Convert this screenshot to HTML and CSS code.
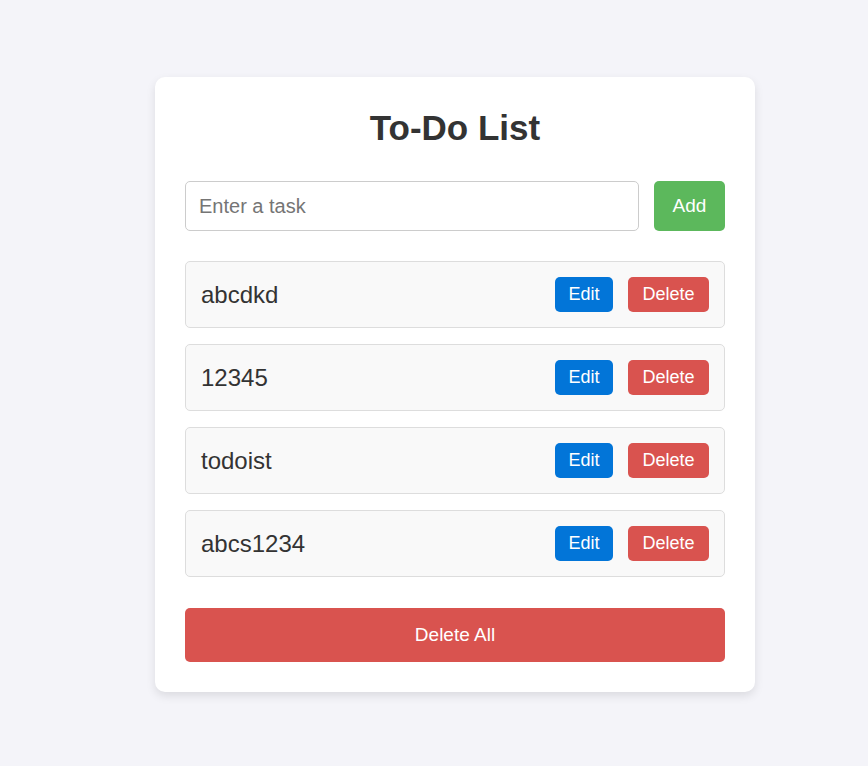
FILE: index.html
```html
<!DOCTYPE html>
<html lang="en">
<head>
<meta charset="UTF-8">
<title>To-Do List</title>
<link rel="stylesheet" href="styles.css">
</head>
<body>
<div class="card">
  <h1 class="title">To-Do List</h1>
  <div class="add-row">
    <input class="task-input" type="text" placeholder="Enter a task">
    <button class="btn btn-add">Add</button>
  </div>
  <ul class="list">
    <li class="item"><span class="item-text">abcdkd</span><div class="actions"><button class="btn btn-edit">Edit</button><button class="btn btn-delete">Delete</button></div></li>
    <li class="item"><span class="item-text">12345</span><div class="actions"><button class="btn btn-edit">Edit</button><button class="btn btn-delete">Delete</button></div></li>
    <li class="item"><span class="item-text">todoist</span><div class="actions"><button class="btn btn-edit">Edit</button><button class="btn btn-delete">Delete</button></div></li>
    <li class="item"><span class="item-text">abcs1234</span><div class="actions"><button class="btn btn-edit">Edit</button><button class="btn btn-delete">Delete</button></div></li>
  </ul>
  <button class="btn btn-delete-all">Delete All</button>
</div>
</body>
</html>
```
FILE: styles.css
```css
* { box-sizing: border-box; }
html, body { margin: 0; padding: 0; }
body {
  background: #f4f4f9;
  font-family: "Liberation Sans", Arial, sans-serif;
  color: #333;
  padding-top: 77px;
  padding-left: 155px;
  min-height: 766px;
}
.card {
  width: 600px;
  background: #fff;
  border-radius: 10px;
  box-shadow: 0 4px 10px rgba(0,0,0,0.1);
  padding: 30px;
}
.title {
  margin: 0 0 33px;
  text-align: center;
  font-size: 35px;
  font-weight: bold;
  line-height: 41px;
  color: #333;
}
.add-row {
  display: flex;
  gap: 15px;
  margin-bottom: 30px;
}
.task-input {
  flex: 1;
  height: 50px;
  border: 1px solid #ccc;
  border-radius: 5px;
  padding: 0 13px;
  font-family: inherit;
  font-size: 20px;
  color: #333;
  outline: none;
}
.task-input::placeholder { color: #757575; }
.btn {
  border: none;
  border-radius: 5px;
  color: #fff;
  font-family: inherit;
  cursor: pointer;
}
.btn-add {
  width: 71px;
  height: 50px;
  background: #5cb85c;
  font-size: 19px;
}
.list {
  list-style: none;
  margin: 0 0 31px;
  padding: 0;
  display: flex;
  flex-direction: column;
  gap: 16px;
}
.item {
  display: flex;
  align-items: center;
  justify-content: space-between;
  background: #f9f9f9;
  border: 1px solid #ddd;
  border-radius: 5px;
  padding: 15px;
  height: 67px;
}
.item-text { font-size: 24px; color: #333; }
.actions { display: flex; gap: 15px; }
.btn-edit, .btn-delete {
  height: 35px;
  padding: 0 13px;
  font-size: 18px;
}
.btn-edit { background: #0275d8; width: 58px; }
.btn-delete { background: #d9534f; width: 81px; }
.btn-delete-all {
  display: block;
  width: 100%;
  height: 54px;
  background: #d9534f;
  font-size: 19px;
}
```
